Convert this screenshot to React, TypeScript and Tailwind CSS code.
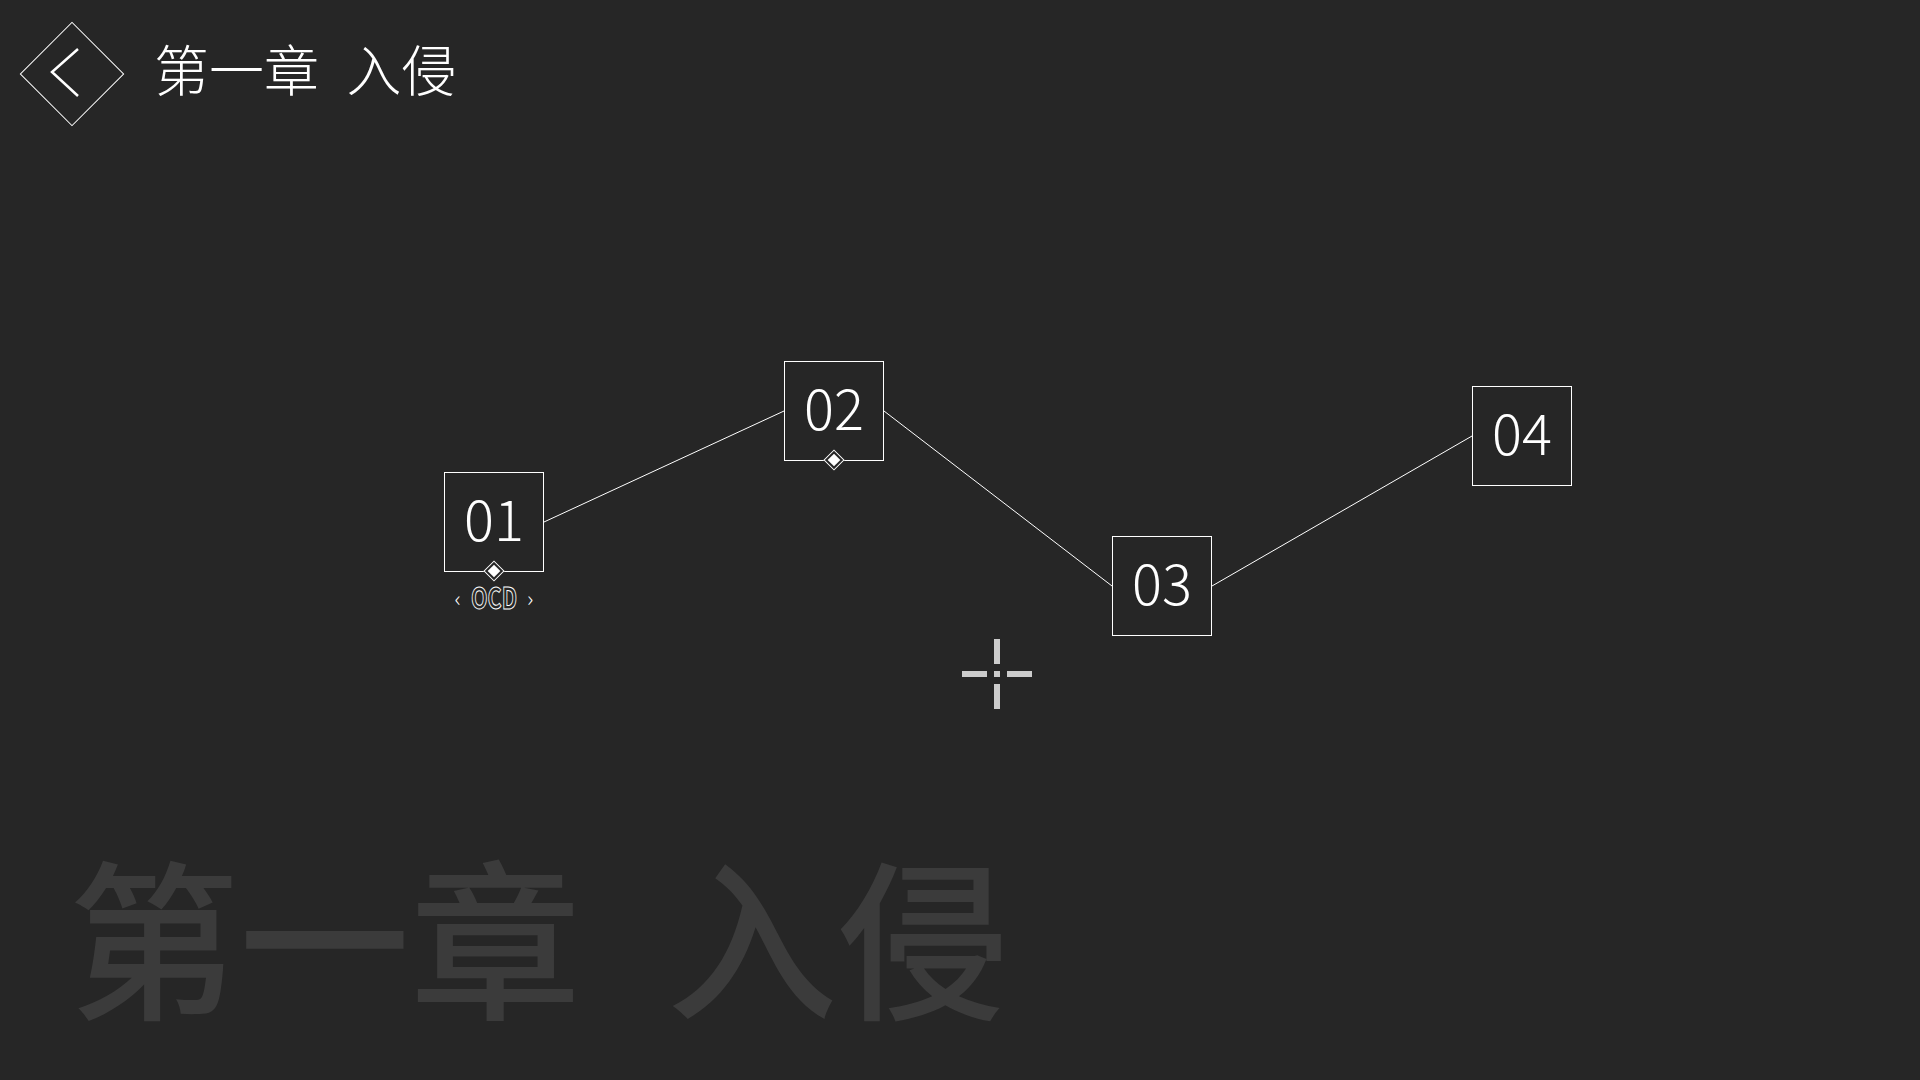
import React from 'react';

const FONT = "font-['Noto_Sans_CJK_SC','Noto_Sans',sans-serif]";

const nodes = [
  { id: '01', x: 444, y: 472, marker: true, label: 'OCD' },
  { id: '02', x: 784, y: 361, marker: true },
  { id: '03', x: 1112, y: 536 },
  { id: '04', x: 1472, y: 386 },
];

function Marker() {
  return (
    <div className="absolute left-1/2 bottom-0 -translate-x-1/2 translate-y-1/2 w-[15px] h-[15px] rotate-45 border border-white bg-[#262626] p-[2px]">
      <div className="w-full h-full bg-white" />
    </div>
  );
}

function Node({ id, x, y, marker, label }: { id: string; x: number; y: number; marker?: boolean; label?: string }) {
  return (
    <div className="absolute" style={{ left: x, top: y }}>
      <div className="relative w-[100px] h-[100px] border border-white bg-[#262626] flex items-center justify-center pb-[10px]">
        <span className="text-[56px] leading-none font-extralight text-white">{id}</span>
        {marker && <Marker />}
      </div>
      {label && (
        <div className="flex items-center justify-center gap-[8px] mt-[10px] leading-none text-white">
          <span className="text-[22px] font-extralight">‹</span>
          <span className="inline-block scale-x-[0.74] -mx-[6px] text-[29px] font-bold text-[#262626] [-webkit-text-stroke:1px_white]">
            {label}
          </span>
          <span className="text-[22px] font-extralight">›</span>
        </div>
      )}
    </div>
  );
}

function Crosshair() {
  return (
    <svg className="absolute left-[962px] top-[639px]" width="70" height="70" viewBox="0 0 70 70" fill="#cccccc">
      <rect x="32" y="0" width="6" height="25" />
      <rect x="32" y="32" width="6" height="6" />
      <rect x="32" y="45" width="6" height="25" />
      <rect x="0" y="32" width="25" height="6" />
      <rect x="45" y="32" width="25" height="6" />
    </svg>
  );
}

export default function App() {
  return (
    <div className={`relative w-[1920px] h-[1080px] bg-[#262626] overflow-hidden flex flex-col ${FONT}`}>
      {/* Header */}
      <div className="flex items-center pl-[19px] pt-[21px]">
        <button className="relative w-[105px] h-[105px] flex items-center justify-center">
          <div className="absolute w-[74px] h-[74px] rotate-45 border border-white" />
          <svg className="absolute left-0 top-0" width="105" height="105" viewBox="0 0 105 105" fill="none">
            <polyline points="59,28 33,51 59,75" stroke="white" strokeWidth="2.5" />
          </svg>
        </button>
        <h1 className="ml-[30px] mb-[12px] text-[55px] leading-none font-extralight text-white">
          第一章<span className="inline-block w-[0.5em]" />入侵
        </h1>
      </div>

      {/* Stage diagram */}
      <svg className="absolute inset-0" width="1920" height="1080" stroke="white" strokeWidth="1" fill="none">
        <line x1="544" y1="522" x2="784" y2="411" />
        <line x1="884" y1="411" x2="1112" y2="586" />
        <line x1="1212" y1="586" x2="1472" y2="436" />
      </svg>
      {nodes.map((n) => (
        <Node key={n.id} {...n} />
      ))}
      <Crosshair />

      {/* Watermark */}
      <div className="mt-auto pl-[68px] pb-[63px] text-[171px] leading-none font-medium text-[#3b3b3b] select-none">
        第一章<span className="inline-block w-[0.5em]" />入侵
      </div>
    </div>
  );
}
